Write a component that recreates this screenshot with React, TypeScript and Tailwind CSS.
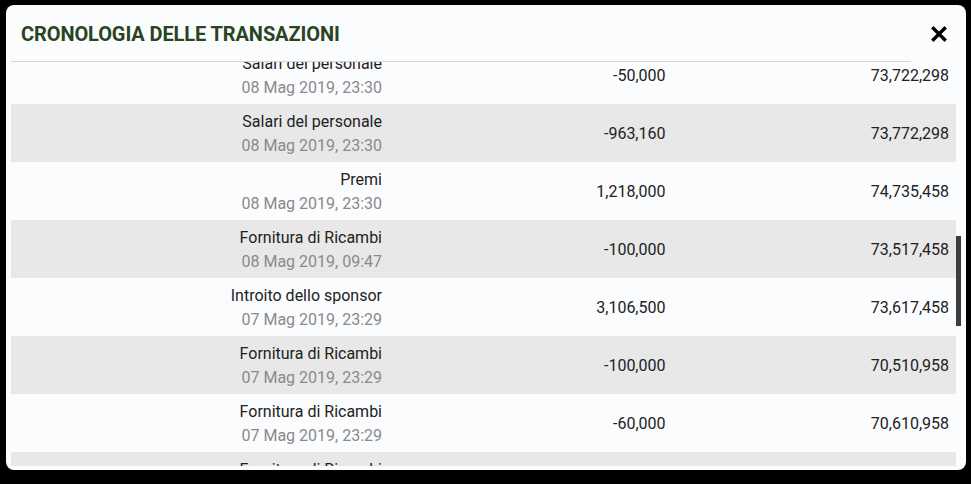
const rows = [
  { label: "Salari del personale", date: "08 Mag 2019, 23:30", amount: "-50,000", balance: "73,722,298" },
  { label: "Salari del personale", date: "08 Mag 2019, 23:30", amount: "-963,160", balance: "73,772,298" },
  { label: "Premi", date: "08 Mag 2019, 23:30", amount: "1,218,000", balance: "74,735,458" },
  { label: "Fornitura di Ricambi", date: "08 Mag 2019, 09:47", amount: "-100,000", balance: "73,517,458" },
  { label: "Introito dello sponsor", date: "07 Mag 2019, 23:29", amount: "3,106,500", balance: "73,617,458" },
  { label: "Fornitura di Ricambi", date: "07 Mag 2019, 23:29", amount: "-100,000", balance: "70,510,958" },
  { label: "Fornitura di Ricambi", date: "07 Mag 2019, 23:29", amount: "-60,000", balance: "70,610,958" },
  { label: "Fornitura di Ricambi", date: "07 Mag 2019, 23:29", amount: "-50,000", balance: "70,670,958" },
];

export default function App() {
  return (
    <div className="h-[484px] w-[971px] bg-black pt-[5px] pl-[6px] font-['Roboto',sans-serif]">
      <div className="w-[960px] h-[465px] rounded-lg bg-[#fbfcfe] flex flex-col overflow-hidden">
        {/* Header */}
        <div className="flex h-[57px] shrink-0">
          <div className="flex-1 ml-[5px] border-b border-[#d4d4d4] flex items-center pl-[10px] pt-[1px]">
            <h2 className="text-[20px] font-bold text-[#29441f] tracking-[-0.1px] uppercase">
              Cronologia delle transazioni
            </h2>
          </div>
          <button className="w-[55px] flex items-center justify-center text-black">
            <svg width="16" height="16" viewBox="0 0 16 16">
              <path d="M2.5 2.5 L13.5 13.5 M13.5 2.5 L2.5 13.5" stroke="currentColor" strokeWidth="3.4" strokeLinecap="square" />
            </svg>
          </button>
        </div>

        {/* Body */}
        <div className="relative flex-1 overflow-hidden pl-[5px] pr-[10px] mb-[4px]">
          <div className="-mt-[16px]">
            {rows.map((r, i) => (
              <div
                key={i}
                className={`grid grid-cols-[40%_30%_30%] h-[58px] pt-[2px] text-[16px] text-[#222] ${
                  i % 2 === 1 ? "bg-[#e8e8e9]" : "bg-[#fbfcfe]"
                }`}
              >
                <div className="flex flex-col items-end justify-center pr-[7px] leading-[24px]">
                  <span>{r.label}</span>
                  <span className="text-[#8a8a8a]">{r.date}</span>
                </div>
                <div className="flex items-center justify-end pr-[7px]">{r.amount}</div>
                <div className="flex items-center justify-end pr-[7px]">{r.balance}</div>
              </div>
            ))}
          </div>
          {/* scrollbar thumb */}
          <div className="absolute right-[5px] top-[174px] h-[90px] w-[5px] bg-[#3d3d3d]" />
        </div>
      </div>
    </div>
  );
}
